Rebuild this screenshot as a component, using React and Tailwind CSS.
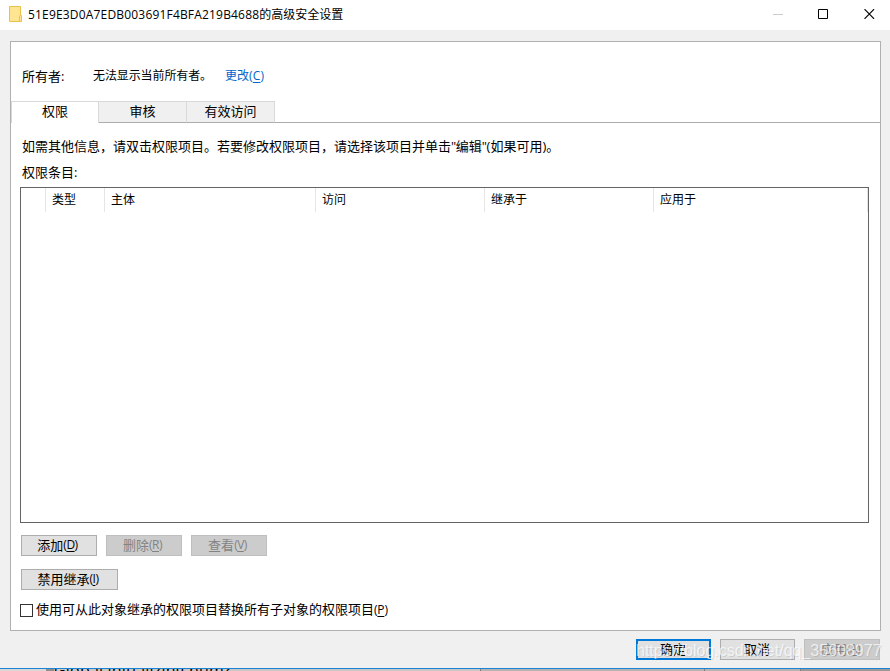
import React, { useState } from "react";

const columns = [
  { label: "", width: "w-[25px]" },
  { label: "类型", width: "w-[59px]" },
  { label: "主体", width: "w-[211px]" },
  { label: "访问", width: "w-[169px]" },
  { label: "继承于", width: "w-[169px]" },
  { label: "应用于", width: "w-[214px]" },
];

const tabs = ["权限", "审核", "有效访问"];

const AccessKey = ({ letter, className = "tracking-[-0.5px]" }) => (
  <span className={`text-[12px] ${className}`}>
    (<span className="underline underline-offset-2">{letter}</span>)
  </span>
);

const Button = ({ children, accessKey, disabled, primary, width = "w-[76px]" }) => (
  <button
    disabled={disabled}
    className={`flex h-[21px] items-center justify-center whitespace-nowrap pb-px leading-none ${width} ${
      accessKey ? "pr-[3px]" : "pr-px"
    } ${primary ? "border-2 border-[#0078d7]" : "border"} ${
      disabled
        ? "border-[#bfbfbf] bg-[#cccccc] text-[#838383]"
        : primary
          ? "bg-[#e1e1e1]"
          : "border-[#adadad] bg-[#e1e1e1]"
    }`}
  >
    {children}
    {accessKey && <AccessKey letter={accessKey} />}
  </button>
);

const TitleBar = () => (
  <div className="flex h-[30px] shrink-0 items-center bg-white pl-[9px] text-[12px]">
    <svg className="mr-[6px] mb-[2px] h-4 w-[13px] shrink-0" viewBox="0 0 13 16">
      <path d="M.5.5h11v9h1v6H.5z" fill="#ffe591" stroke="#e8c34b" />
      <path d="M10.5 15.5v-5l1-1" fill="none" stroke="#e8c34b" />
    </svg>
    <span className="whitespace-nowrap">
      <span className="tracking-[0.18px]">51E9E3D0A7EDB003691F4BFA219B4688</span>的高级安全设置
    </span>
    <div className="ml-auto flex h-full items-start pt-[9px] pr-[15px]">
      <svg className="mr-[35px] h-[10px] w-[10px]" viewBox="0 0 10 10">
        <path d="M0 5.5h10" stroke="#cccccc" />
      </svg>
      <svg className="mr-[36px] h-[10px] w-[10px]" viewBox="0 0 10 10">
        <path d="M.5.5h9v9h-9z" fill="none" stroke="#000" />
      </svg>
      <svg className="h-[10px] w-[11px]" viewBox="0 0 11 10">
        <path d="M.5.2l9.6 9.6M10.1.2L.5 9.8" stroke="#000" strokeWidth="1.2" />
      </svg>
    </div>
  </div>
);

const App = () => {
  const [activeTab, setActiveTab] = useState(0);
  const [replaceChildren, setReplaceChildren] = useState(false);

  return (
    <div className="relative flex h-[671px] w-[890px] flex-col overflow-hidden bg-[#f0f0f0] font-['Open_Sans','Noto_Sans_CJK_SC',sans-serif] text-[13px] leading-[18px] text-black">
      <TitleBar />

      <div className="mt-[11px] ml-[10px] flex h-[590px] w-[871px] shrink-0 flex-col border border-[#b0b0b0] bg-white">
        <div className="flex h-[59px] items-center pl-[11px] pt-[9px]">
          <span className="w-[71px]">所有者:</span>
          <span className="w-[132px] text-[12px] tracking-[-0.1px]">无法显示当前所有者。</span>
          <a href="#" className="text-[12px] text-[#0066cc]">
            更改<AccessKey letter="C" className="tracking-[0.2px]" />
          </a>
        </div>

        <div className="flex h-[22px] shrink-0">
          {tabs.map((tab, i) => (
            <button
              key={tab}
              onClick={() => setActiveTab(i)}
              className={`flex w-[88px] items-center justify-center border-t border-r border-[#d9d9d9] pb-[2px] leading-none ${
                i === 0 ? "border-l" : ""
              } ${activeTab === i ? "bg-white" : "border-b border-b-[#acacac] bg-[#f0f0f0]"}`}
            >
              {tab}
            </button>
          ))}
          <div className="flex-1 border-b border-[#acacac]" />
        </div>

        <div className="flex flex-1 flex-col pl-[9px]">
          <p className="mt-[14px] pl-[2px] whitespace-nowrap">
            如需其他信息，请双击权限项目。若要修改权限项目，请选择该项目并单击
            <span className="tracking-[-0.5px]">"</span>编辑<span className="tracking-[-0.3px]">"</span>(如果可用)。
          </p>
          <p className="mt-[8px] pl-[2px]">权限条目:</p>

          <div className="mt-[6px] h-[336px] w-[849px] shrink-0 border border-[#646464]">
            <div className="flex h-6 text-[12px]">
              {columns.map((col, i) => (
                <div key={i} className={`flex shrink-0 items-center border-r border-[#e5e5e5] pl-[6px] ${col.width}`}>
                  {col.label}
                </div>
              ))}
            </div>
          </div>

          <div className="mt-3 flex gap-[9px] pl-px">
            <Button accessKey="D">添加</Button>
            <Button accessKey="R" disabled>删除</Button>
            <Button accessKey="V" disabled>查看</Button>
          </div>
          <div className="mt-[13px] flex pl-px">
            <Button accessKey="I" width="w-[97px]">禁用继承</Button>
          </div>

          <label className="mt-[10px] flex items-center whitespace-nowrap">
            <input
              type="checkbox"
              checked={replaceChildren}
              onChange={(e) => setReplaceChildren(e.target.checked)}
              className="mt-[2px] mr-[3px] h-[13px] w-[13px] appearance-none border border-[#333333] bg-white checked:bg-[#333333]"
            />
            <span>
              使用可从此对象继承的权限项目替换所有子对象的权限项目
              <AccessKey letter="P" className="tracking-[-0.2px]" />
            </span>
          </label>
        </div>
      </div>

      <div className="mt-2 flex justify-end gap-[9px] pr-[10px]">
        <Button primary width="w-[75px]">确定</Button>
        <Button width="w-[75px]">取消</Button>
        <Button accessKey="A" disabled>应用</Button>
      </div>

      {/* sliver of the window behind the dialog */}
      <div className="mt-auto flex h-[3px] shrink-0 overflow-hidden border-t border-[#1883d7] bg-[#c8c8c8]">
        <div className="w-[46px] bg-[#d8d8d8]" />
        <div className="w-[8px] bg-[#8f8f8f]" />
        <span className="-mt-[8px] w-[427px] border-r border-[#808080] text-[16px] whitespace-nowrap tracking-[0.2px]">
          Global initializing num?
        </span>
        <div className="w-[223px] bg-[#b4b4b4]" />
        <div className="w-[96px] border-l border-[#808080] bg-[#b4b4b4]" />
        <div className="flex-1 border-l border-[#808080] bg-[#999999]" />
      </div>

      <div className="pointer-events-none absolute top-[641px] left-[636px] font-['Liberation_Sans',sans-serif] text-[16px] leading-[20px] whitespace-nowrap text-white/70 [text-shadow:1px_1px_0_#0000001a]">
        https://blog.csdn.net/qq_35608977
      </div>
    </div>
  );
};

export default App;
